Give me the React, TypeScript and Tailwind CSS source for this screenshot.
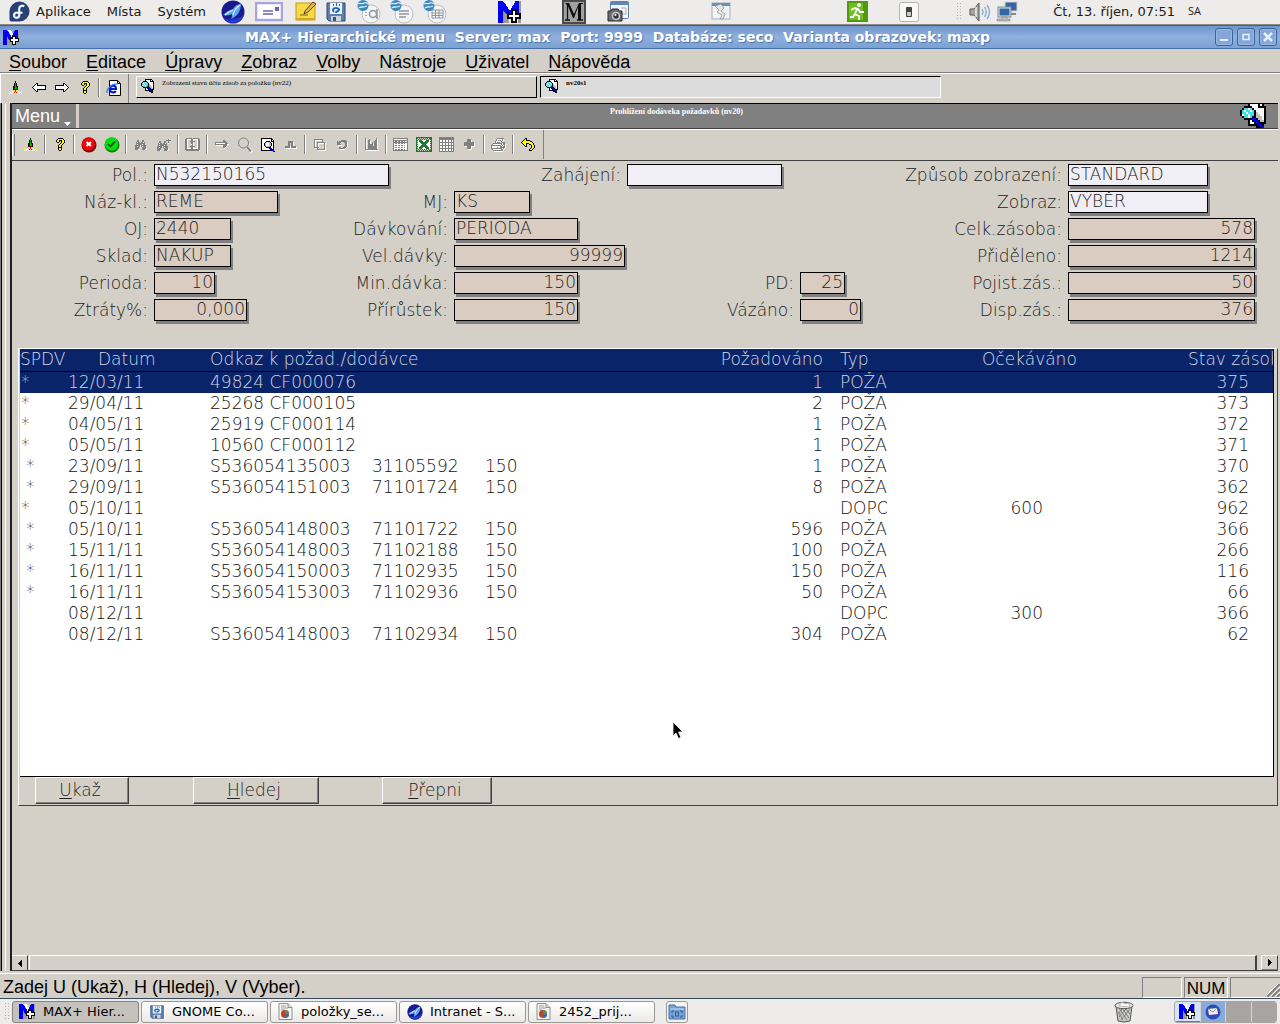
import React from 'react'

const PALETTE: Record<string, string> = {
  k: '#000000', w: '#ffffff', g: '#808080', G: '#00b400', r: '#e00000', y: '#ffff00',
  b: '#0000ff', c: '#40e0e8', l: '#c0c0c0', d: '#004000', n: '#000090', e: '#1c7c2c', s: '#d4d0c8',
}

/** Small bitmap-style icon: every character is one pixel, "." is transparent. */
function Pixels({ rows, size = 1 }: { rows: string[]; size?: number }) {
  const w = Math.max(...rows.map((r) => r.length))
  return (
    <svg className="shrink-0" width={w * size} height={rows.length * size} viewBox={`0 0 ${w} ${rows.length}`} shapeRendering="crispEdges" aria-hidden="true">
      {rows.flatMap((row, y) =>
        row.split('').map((c, x) => (c === '.' ? null : <rect key={`${x}-${y}`} x={x} y={y} width="1" height="1" fill={PALETTE[c]} />)),
      )}
    </svg>
  )
}

const ROCKET = ['......k......', '......k......', '.....kGk.....', '.....kGk.....', '.....kGk.....', '....kdGdk....', '....kdGGk....', '....kdGGk....', '....kkrkk....', '.....yry.....', 'y..w.yry.w..y', '.wyw.rwr.wyw.', 'w.w.wy.yw.w.w']
const HELP = ['...kkkkk..', '..kyyyyyk.', '.kyykkkyyk', '.kyyk.kyyk', '..kk..kyyk', '.....kyyk.', '....kyyk..', '...kyyk...', '...kyyk...', '...kkkk...', '...kyyk...', '...kyyk...', '....kk....']
const ARROW_L = ['....kk........', '...kwk........', '..kwwkkkkkkkkk', '.kwwwwwwwwwwwk', 'kwwwwwwwwwwwwk', '.kwwwwwwwwwwwk', '..kwwkkkkkkkkk', '...kwk........', '....kk........']
const ARROW_R = ARROW_L.map((r) => r.split('').reverse().join(''))
const DOC_FIND = ['....kkkkkkk...', '....kwwwwkwk..', '..kkkkwwwkkkk.', '.kccwckwwwwwk.', 'kcwccwckwwwwk.', 'kccwcccklwwwk.', 'kwccwcckllwwk.', '.kccwckklllwk.', '..kkkkbbkllwk.', '....kwkbbkllk.', '....kwwkbnkkk.', '....kkkkkbbk..', '........kknb..', '..........kk..']
const PAGE_FIND = ['kkkkkkkkkkk...', 'kwwwwwwwwwkk..', 'kwwwwwwwwwkwk.', 'kwwwwkkkkwkkk.', 'kwwwklwllkwwk.', 'kwwklwwwllkwk.', 'kwwklwwwllkwk.', 'kwwklwwwllkwk.', 'kwwwkllllkwwk.', 'kwwwwkkkkbwwk.', 'kwwwwwwwkbbwk.', 'kwwwwwwwwkbbk.', 'kkkkkkkkkkkbb.', '............bk']
const BINOC = ['..gg...gg...', '..gg...gg...', '.gwgg.ggwg..', '.ggggggggg..', '.gwggggwgg..', 'gggggwggggg.', 'ggwgg.gwggg.', 'gggg...gggg.', 'gggg...ggggw', 'gggw...gggww']
const BINOC_PLUS = ['...........g..', '.........ggggg', '..gg...gg..g..', '..gg...gg..g..', '.gwgg.ggwg.w..', '.ggggggggg....', '.gwggggwgg....', 'gggggwggggg...', 'ggwgg.gwggg...', 'gggg...gggg...', 'gggg...ggggw..', 'gggw...gggw...']
const ARROW_G = ['.........gg....', '.........ggg...', '.gggggggggggg..', '.gwwwwwwwwwggg.', '.ggggggggggggww', '..wwwwwwwggggw.', '.........gggw..', '.........ggw...', '..........w....']
const OMEGA = ['...ggggg....', '...gggggw...', '...gg.ggw...', '...gg.ggw...', '...gg.ggw...', 'gggggwggggg.', 'gggggwgggggw', '.wwwww.wwwww']
const COPY = ['ggggggggg...', 'gwwwwwwwg...', 'gw......g...', 'gw.gggggggg.', 'gw.gwwwwwwgw', 'gw.gw.....gw', 'gw.gw.....gw', 'gw.gw.....gw', 'gggggw....gw', '.wwgw.....gw', '...ggggggggw', '....wwwwwwww']
const REDO = ['....ggggg..', 'g.gggggggg.', 'gggg...gggw', 'ggg.....ggw', 'gggg....ggw', '.wwww...ggw', '.......gggw', '..gg..gggw.', '..ggggggw..', '...wwwww...']
const CHART = ['g..........g..', 'gw..g......gw.', 'gw.gg.....ggw.', 'gw.ggw...gggw.', 'gw.ggw.g.gggw.', 'gw.ggw.g.gggw.', 'gw.gggggwgggw.', 'gw.gggggwgggw.', 'gw.gggggggggw.', 'gw.gggggggggw.', 'gw.gggggggggw.', 'ggggggggggggg.', '.wwwwwwwwwwwww']
const SHEET = ['ggggggggggggggg', 'gwwwwwwwwwwwwwg', 'ggggggggggggggg', 'gwggwggwggwgwwg', 'ggggggggggggggg', 'gwggwggwggwgwwg', 'gwwwwwwwwwwwwwg', 'gwggwggwggwgwwg', 'gwwwwwwwwwwwwwg', 'gwggwggwggwgwwg', 'gwwwwwwwwwwwwwg', 'gwggwggwggwgwwg', 'ggggggggggggggg']
const GRID = ['ggggggggggggggg', 'ggggggggggggggg', 'ggggggggggggggg', 'gwwgwwgwwgwwgwg', 'gwwgwwgwwgwwgwg', 'ggggggggggggggg', 'gwwgwwgwwgwwgwg', 'gwwgwwgwwgwwgwg', 'ggggggggggggggg', 'gwwgwwgwwgwwgwg', 'gwwgwwgwwgwwgwg', 'ggggggggggggggg', 'gwwgwwgwwgwwgwg', 'gwwgwwgwwgwwgwg', 'ggggggggggggggg']
const PLUS = ['...gggg....', '...ggggw...', '...ggggw...', 'gggggggggg.', 'ggggggggggw', 'ggggggggggw', 'ggggggggggw', '.wwggggwwww', '...ggggw...', '...ggggw...', '....wwww...']
const EXCEL = ['eeeeeeeeeeeeeeee', 'eeseseseseseseee', 'esesesesesesesee', 'eeweeewwwweeewse', 'esweeeewweeeewee', 'eewweeeeeeeewwse', 'eswwweeeeeewwwee', 'eewwwweeeewwwwse', 'eswwweeeeeewwwee', 'eewweeeeeeeewwse', 'esweeeewweeeewee', 'eeweeewwwweeewse', 'esesesesesesesee', 'eeseseseseseseee', 'eeeeeeeeeeeeeeee']
const PRINTER = ['......ggggggg..', '.....gwwwwwgw..', '.....gwgggwgw..', '....gwwwwwgw...', '....gwgggwgggg.', '..gggggggggwgg.', '.gwwwwwwwwgwggw', 'ggggggggggwgwgw', 'gwwwwwwwwggwggw', 'gwwwwwgwwgggggw', 'gggggggggggwgw.', '.gwwwwwwwwggw..', '..ggggggggggw..', '...wwwwwwwww...']
const UNDO = ['....kk........', '...kyk........', '..kyykkkk.....', '.kyyyyyyykk...', 'kyyyyyyyyyyk..', '.kyyykkkyyyyk.', '..kyyk..kkyyk.', '...kyk....kyyk', '....kk....kyyk', '..........kyyk', '.........kyyk.', '........kyyk..', '........kkk...']
const BOOK = ['.gggggg.gggggg.', 'ggwwwwggwwwwwgg', 'ggw...ggw...wgg', 'ggw..ggggg..wgg', 'ggw...ggw...wgg', 'ggw...ggw...wgg', 'ggw...wgw...wgg', 'ggw...ggw...wgg', 'ggw..ggggg..wgg', 'ggw...ggw...wgg', 'ggwwwwggwwwwwgg', 'ggggggggggggggg', '.gggggggggggggw']
const TRI_L = ['...k', '..kk', '.kkk', 'kkkk', '.kkk', '..kk', '...k']
const TRI_R = TRI_L.map((r) => r.split('').reverse().join(''))

function MaxLogo({ s = 18 }: { s?: number }) {
  return (
    <svg width={s} height={s} viewBox="0 0 18 18" className="shrink-0" shapeRendering="crispEdges" aria-hidden="true">
      <path d="M15 1h2v16h-2zM4 8l4 4v5H4z" fill="#9a9a9a" />
      <path d="M5 1h3l3 4-2 3z" fill="#fff" />
      <path d="M0 1h4l5 7 4-7h3v13h-4V9l-3 5-5-6v9H0z" fill="#0000f4" />
      <path d="M10 7h4v3h3v4h-3v3h-4v-3H7v-4h3z" fill="#000" />
      <path d="M11 8h2v3h3v2h-3v3h-2v-3H8v-2h3z" fill="#fff" />
    </svg>
  )
}
function Fedora() {
  return (
    <svg width="21" height="21" viewBox="0 0 22 22" aria-hidden="true">
      <path d="M11 .5A10.500 10.500 0 1 1 11 21.500H2.500Q.5 21.500.5 19.500V11A10.500 10.500 0 0 1 11 .5z" fill="#294172" />
      <path d="M16 5.500c-3-1.500-5.300.2-5.300 3V15c0 3-4 3.500-5.200 1.200-.8-2.500.8-4.200 3-4h5.500" fill="none" stroke="#a9c3e8" strokeWidth="2.600" />
      <path d="M16 5.500c-3-1.500-5.300.2-5.300 3V15c0 3-4 3.500-5.200 1.200-.8-2.500.8-4.200 3-4h5.500" fill="none" stroke="#fff" strokeWidth="1.500" />
    </svg>
  )
}
function Seamonkey({ s = 24 }: { s?: number }) {
  return (
    <svg width={s} height={s} viewBox="0 0 24 24" className="shrink-0" aria-hidden="true">
      <circle cx="12" cy="12" r="11.500" fill="#1a1a8e" />
      <path d="M3 18A11 11 0 0 0 23 14c-4 5-13 7-20 4z" fill="#2437d8" />
      <path d="M20 4c-4 0-7 3-8 5-3 1-7 3-10 6 4 1 7 0 9-1 0 2 0 3-1 5 6-2 10-8 10-15z" fill="#5aa4f4" />
      <path d="M19 5c-3 2-6 6-7 10M12 10c-3 1-6 3-8 5" stroke="#d8f0ff" strokeWidth="1.200" fill="none" />
    </svg>
  )
}
function Mail() {
  return (
    <svg width="28" height="20" viewBox="0 0 28 20" aria-hidden="true">
      <rect x="1" y="1" width="26" height="17" fill="#fff" stroke="#a9a4dc" strokeWidth="2.500" />
      <path d="M8 9h10M8 12h10" stroke="#8d88cc" strokeWidth="2" />
      <path d="M20 5h4v4h-4z" fill="#6a66b8" />
    </svg>
  )
}
function Note() {
  return (
    <svg width="22" height="21" viewBox="0 0 22 21" aria-hidden="true">
      <rect x="1" y="2" width="19" height="17" fill="#f5d945" stroke="#c79a12" />
      <path d="M1 17h19v2H1z" fill="#d7a320" />
      <path d="M9 13l1-3L18 1l3 2-8 8z" fill="#e6b457" stroke="#5e4312" />
      <path d="M5 14h8" stroke="#75611a" />
    </svg>
  )
}
function Floppy({ s = 20 }: { s?: number }) {
  return (
    <svg width={s} height={s} viewBox="0 0 20 20" className="shrink-0" aria-hidden="true">
      <path d="M1 1h18v18H3l-2-2z" fill="#5a7fb0" stroke="#2f4a70" />
      <path d="M4 1h12v11H4z" fill="#eef3fa" />
      <path d="M5 14h10v5H5z" fill="#cfd5dc" /><path d="M7 15h3v4H7z" fill="#34587f" />
      <path d="M8 10c-2-2-1-4 2-4 3 0 4 2 2 3-1 1-2 0-2 2" fill="none" stroke="#1b66c9" strokeWidth="2" />
      <path d="M7 2h1v2H7zM10 1h1v3h-1zM13 2h1v2h-1z" fill="#1b66c9" />
    </svg>
  )
}
function Office({ kind }: { kind: 'draw' | 'text' | 'calc' }) {
  return (
    <svg width="24" height="24" viewBox="0 0 24 24" aria-hidden="true">
      <circle cx="14" cy="14" r="9" fill="#f4f5f6" stroke="#b9bec3" />
      {kind === 'text' && <path d="M9 11h10M9 14h10M9 17h7" stroke="#8f979e" strokeWidth="1.500" />}
      {kind === 'draw' && <g fill="none" stroke="#8f979e" strokeWidth="1.500"><circle cx="16" cy="14" r="3.500" /><path d="M9 12v1M9 15v1M19 10h1v8h-1" /></g>}
      {kind === 'calc' && <path d="M9 10h11v8H9zM9 13h11M9 15.500h11M12.500 10v8M16 10v8" fill="none" stroke="#8f979e" />}
      <circle cx="6" cy="5.500" r="5.500" fill="#3a86bd" />
      <path d="M1 4c3-2 4 1 6-1 2-1 3 0 4 1M2 8c2-2 4 0 8-2" stroke="#d7ecf9" strokeWidth="1.300" fill="none" />
    </svg>
  )
}
function BigM() {
  return (
    <svg width="24" height="24" viewBox="0 0 24 24" aria-hidden="true">
      <rect x="1" y="1" width="22" height="22" fill="#a2a2a2" stroke="#4a4a4a" strokeWidth="2" />
      <path d="M3 20h5M15 20h6M5.500 20V4" stroke="#111" strokeWidth="1.300" />
      <path d="M3 3h4l5 11 5-11h4v1h-2v16h-3V7l-4 11h-1L6 6z" fill="#0c0c0c" />
    </svg>
  )
}
function Camera() {
  return (
    <svg width="23" height="23" viewBox="0 0 23 23" aria-hidden="true">
      <rect x="3.500" y="1.500" width="18" height="17" rx="1" fill="#f2f4f6" stroke="#5c7fa8" />
      <path d="M4 2h17v3H4z" fill="#5f88b8" />
      <path d="M14 8h5v6h-4" fill="none" stroke="#a9afb5" />
      <path d="M1 11h3l1-2h6l1 2h3v10H1z" fill="#6a6d70" stroke="#2a2a2a" />
      <circle cx="9" cy="16" r="4.300" fill="#c9cdd0" /><circle cx="9" cy="16" r="2.700" fill="#30363c" /><circle cx="8.500" cy="15" r="1" fill="#fff" />
    </svg>
  )
}
function Broken() {
  return (
    <svg width="20" height="19" viewBox="0 0 20 19" aria-hidden="true">
      <rect x="1" y="1" width="18" height="16" fill="#f2f3f3" stroke="#a8b0b8" />
      <path d="M1 1h18v3H1z" fill="#6f8fb5" />
      <path d="M4 4l4 4-2 2 5 3-2 4h3l2-5-4-3 3-3-3-4z" fill="#e6e6e4" stroke="#8f969b" strokeWidth=".8" />
    </svg>
  )
}
function Runner() {
  return (
    <svg width="21" height="21" viewBox="0 0 21 21" aria-hidden="true">
      <rect width="21" height="21" fill="#4f9a0c" /><path d="M2 2h14v17H2z" fill="#6fbe22" />
      <circle cx="12" cy="4" r="2" fill="#fff" />
      <path d="M4 9l4-2 3 1 2 3 4 0M10 8l-2 5 4 2 0 4M8 13l-2 3H3" fill="none" stroke="#fff" strokeWidth="1.900" />
    </svg>
  )
}
function Switch() {
  return (
    <svg width="20" height="20" viewBox="0 0 20 20" aria-hidden="true">
      <rect x=".5" y=".5" width="19" height="19" rx="2" fill="#f8f8f7" stroke="#b5b5b2" />
      <rect x="7" y="5" width="6" height="10" rx="1" fill="#444" /><path d="M8 10h4v4H8z" fill="#c9c9c9" />
    </svg>
  )
}
function Speaker() {
  return (
    <svg width="22" height="20" viewBox="0 0 22 20" aria-hidden="true">
      <path d="M1 7h4l5-6v18l-5-6H1z" fill="#a3a6a3" stroke="#555753" /><path d="M7 5v10" stroke="#eee" strokeWidth="1.500" />
      <path d="M13 7q2 3 0 6M15.500 5q3.500 5 0 10M18 3q5 7 0 14" fill="none" stroke="#83a9d6" strokeWidth="1.300" />
    </svg>
  )
}
function Network() {
  return (
    <svg width="22" height="21" viewBox="0 0 22 21" aria-hidden="true">
      <rect x="9" y="1" width="12" height="9" fill="#3465a4" stroke="#d3d7cf" /><path d="M11 12h9v2h-9z" fill="#888a85" />
      <rect x="2" y="6" width="13" height="10" fill="#3465a4" stroke="#888a85" /><rect x="3" y="7" width="11" height="8" fill="none" stroke="#e8ecef" />
      <path d="M6 16h5v2h3v2H1v-2h5z" fill="#b6b9b4" stroke="#777" strokeWidth=".5" />
    </svg>
  )
}
function Explorer() {
  return (
    <svg width="16" height="16" viewBox="0 0 16 16" aria-hidden="true">
      <path d="M3.500.5h8l3 3v12h-11z" fill="#fff" stroke="#000" /><path d="M11.500.5v3h3" fill="none" stroke="#000" />
      <path d="M4 9h6c0-5-6-4-6.300 0 0 4 5 4 6 2" fill="none" stroke="#0018c8" strokeWidth="2.200" />
      <path d="M1 13C0 9 6 3 12 4" fill="none" stroke="#2d7fe8" strokeWidth="1.200" />
    </svg>
  )
}
function Ball({ ok }: { ok?: boolean }) {
  return (
    <svg width="16" height="16" viewBox="0 0 16 16" aria-hidden="true">
      <circle cx="8" cy="8" r="7.500" fill={ok ? '#087808' : '#700000'} />
      <circle cx="7.500" cy="7" r="6.700" fill={ok ? '#00e010' : '#e80808'} />
      {ok ? <path d="M4 7l2.500 2.500L11 4.500" fill="none" stroke="#003800" strokeWidth="1.500" /> : <path d="M5.500 5l4.500 4M10 5L5.500 9" stroke="#fff" strokeWidth="2" />}
    </svg>
  )
}
function Lens() {
  return (
    <svg width="16" height="16" viewBox="0 0 16 16" aria-hidden="true">
      <path d="M10 10l5 5" stroke="#fff" strokeWidth="3" /><circle cx="6.500" cy="6" r="5" fill="none" stroke="#808080" /><path d="M10 10l4 4.500" stroke="#808080" strokeWidth="2" />
    </svg>
  )
}
function ChartDoc() {
  return (
    <svg width="15" height="17" viewBox="0 0 15 17" className="shrink-0" aria-hidden="true">
      <path d="M1 .5h9l4 4v12H1z" fill="#f4f4f2" stroke="#8f918d" /><path d="M10 .5v4h4" fill="#d8d9d6" stroke="#8f918d" />
      <path d="M3 3h5M3 5h7M3 7h4" stroke="#9fa19d" />
      <circle cx="7" cy="11" r="4" fill="#b5442e" /><path d="M7 11h4a4 4 0 0 1-4 4z" fill="#3b6ea8" /><path d="M7 11V7a4 4 0 0 1 4 4z" fill="#5d9147" />
    </svg>
  )
}
function FolderCam() {
  return (
    <svg width="18" height="17" viewBox="0 0 18 17" aria-hidden="true">
      <path d="M1 2h6l1 2h9v12H1z" fill="#76a3d8" stroke="#4673a8" /><path d="M2 6h14" stroke="#c1d8f0" />
      <path d="M4 8h2M4 8v2M14 8h-2M14 8v2M4 14h2M4 14v-2M14 14h-2M14 14v-2" stroke="#30598c" /><rect x="7.500" y="9" width="3" height="4" fill="none" stroke="#30598c" />
    </svg>
  )
}
function Trash() {
  return (
    <svg width="21" height="22" viewBox="0 0 21 22" aria-hidden="true">
      <path d="M2 5l2 15q6 2 12 0L18 5z" fill="#c6c9c4" stroke="#555753" />
      <path d="M5 7l8 12M8 7l7 10M4 11l5 8M11 7l5 6M16 8L7 19M12 8L5 16M8 8l-3 4" stroke="#70736d" strokeWidth=".8" />
      <ellipse cx="10" cy="4.500" rx="9" ry="3.200" fill="#e9ebe8" stroke="#555753" /><path d="M5 5l3-4 3 2 4-1 1 4z" fill="#fff" stroke="#999" strokeWidth=".7" />
    </svg>
  )
}

const PANEL: { icon: React.ReactNode; gap: string; name: string }[] = [
  { icon: <Seamonkey />, gap: 'ml-[15px]', name: 'SeaMonkey' },
  { icon: <Mail />, gap: 'ml-[10px]', name: 'Pošta' },
  { icon: <Note />, gap: 'ml-[12px]', name: 'Poznámky' },
  { icon: <Floppy />, gap: 'ml-[9px]', name: 'GNOME Commander' },
  { icon: <Office kind="draw" />, gap: 'ml-[11px]', name: 'Kreslení' },
  { icon: <Office kind="text" />, gap: 'ml-[9px]', name: 'Textový dokument' },
  { icon: <Office kind="calc" />, gap: 'ml-[9px]', name: 'Sešit' },
  { icon: <MaxLogo s={24} />, gap: 'ml-[51px]', name: 'MAX+' },
  { icon: <BigM />, gap: 'ml-[40px]', name: 'M' },
  { icon: <Camera />, gap: 'ml-[21px]', name: 'Snímek obrazovky' },
  { icon: <Broken />, gap: 'ml-[81px]', name: 'Ukončit program' },
  { icon: <Runner />, gap: 'ml-[116px]', name: 'Odhlásit' },
  { icon: <Switch />, gap: 'ml-[31px]', name: 'Vypnout' },
]

function Grip() {
  return <div className="h-[19px] w-[5px] bg-[radial-gradient(circle,#b4b2af_1px,transparent_1px)] bg-[length:3px_3px]" />
}

function TopPanel() {
  return (
    <header className="flex h-[25px] items-center border-b border-[#8a8983] bg-[#edeceb] pb-px pl-[9px] font-['DejaVu_Sans'] text-[13px] whitespace-nowrap text-[#1a1a1a]">
      <Fedora />
      <nav className="ml-[6px] flex gap-4">
        <button>Aplikace</button><button>Místa</button><button>Systém</button>
      </nav>
      {PANEL.map((p) => (
        <button key={p.name} aria-label={p.name} className={`shrink-0 ${p.gap}`}>{p.icon}</button>
      ))}
      <div className="ml-[37px]"><Grip /></div>
      <div className="ml-[8px]"><Speaker /></div>
      <div className="ml-[5px]"><Network /></div>
      <button className="ml-auto">Čt, 13. říjen, 07:51</button>
      <span className="mr-[79px] ml-[13px] text-[11px] font-['Open_Sans']">SA</span>
    </header>
  )
}

function WinButton({ label, children }: { label: string; children: React.ReactNode }) {
  return (
    <button aria-label={label} className="flex h-[18px] w-[18px] items-center justify-center rounded-[3px] border border-[#3d6298] bg-[#83a7d9] shadow-[inset_0_0_0_1px_#98b8e2]">
      <svg width="10" height="10" viewBox="0 0 10 10" fill="none" stroke="#e8f1fb" strokeWidth="2">{children}</svg>
    </button>
  )
}

function TitleBar() {
  return (
    <div className="flex h-6 items-center border-t border-b border-t-[#3f5f8d] border-b-[#4671a8] bg-linear-to-b from-[#6f95cc] via-[#8fb0dd] to-[#7ba0d3] px-[3px]">
      <MaxLogo s={17} />
      <h1 className="flex-1 text-center font-['DejaVu_Sans'] text-[14px] leading-5 font-bold whitespace-pre text-white [text-shadow:1px_1px_1px_#4d74aa]">
        {'MAX+ Hierarchické menu  Server: max  Port: 9999  Databáze: seco  Varianta obrazovek: maxp'}
      </h1>
      <div className="flex gap-1">
        <WinButton label="Minimalizovat"><path d="M1 8h8" /></WinButton>
        <WinButton label="Maximalizovat"><path d="M2 2.500h6v5H2z" strokeWidth="1.500" /></WinButton>
        <WinButton label="Zavřít"><path d="M1 1l8 8M9 1l-8 8" strokeWidth="2.500" /></WinButton>
      </div>
    </div>
  )
}

const MENU: [string, string, string][] = [
  ['', 'S', 'oubor'], ['', 'E', 'ditace'], ['', 'Ú', 'pravy'], ['', 'Z', 'obraz'], ['', 'V', 'olby'], ['Nás', 't', 'roje'], ['', 'U', 'živatel'], ['', 'N', 'ápověda'],
]

function Tab({ active, children }: { active?: boolean; children: React.ReactNode }) {
  return (
    <button
      className={
        active
          ? "flex h-[22px] w-[401px] items-start border border-t-black border-r-white border-b-white border-l-black bg-[#dcdcdc] pt-[2px] pl-1 font-['Liberation_Serif'] text-[7px] leading-[9px] font-bold"
          : "flex h-[22px] w-[401px] items-start border border-t-white border-r-black border-b-black border-l-white pt-[2px] pl-1 font-['Liberation_Serif'] text-[7px] leading-[9px]"
      }
    >
      <Pixels rows={DOC_FIND} />
      <span className="ml-[7px]">{children}</span>
    </button>
  )
}

function Tool({ label, children }: { label: string; children: React.ReactNode }) {
  return <button aria-label={label} className="flex h-5 w-[23px] shrink-0 items-center justify-center">{children}</button>
}
function Sep() {
  return <div className="mx-[2px] h-[19px] w-[2px] shrink-0 border-r border-l border-r-white border-l-[#808080]" />
}

const LIGHT = "font-['DejaVu_Sans'] font-extralight text-[17px]"

type FieldProps = { id: string; label: string; value: string; w: string; cell: string; labelCell: string; right?: boolean; white?: boolean }
function Field({ id, label, value, w, cell, labelCell, right, white }: FieldProps) {
  return (
    <>
      <label htmlFor={id} className={`justify-self-end pr-[6px] leading-[22px] whitespace-nowrap ${labelCell}`}>{label}</label>
      <input
        id={id}
        defaultValue={value}
        className={`h-[22px] border border-black px-px shadow-[2px_3px_0_#808080] outline-none ${w} ${cell} ${right ? 'text-right' : ''} ${white ? 'bg-[#f0eff6]' : 'bg-[#daccc1]'}`}
      />
    </>
  )
}

const FIELDS: FieldProps[] = [
  { id: 'pol', label: 'Pol.:', value: 'N532150165', w: 'w-[235px]', labelCell: 'col-start-1 row-start-1', cell: 'col-start-2 col-span-2 row-start-1', white: true },
  { id: 'zah', label: 'Zahájení:', value: '', w: 'w-[155px]', labelCell: 'col-start-4 row-start-1', cell: 'col-start-5 row-start-1', white: true },
  { id: 'zpu', label: 'Způsob zobrazení:', value: 'STANDARD', w: 'w-[140px]', labelCell: 'col-start-7 row-start-1', cell: 'col-start-8 row-start-1', white: true },
  { id: 'naz', label: 'Náz-kl.:', value: 'REME', w: 'w-[124px]', labelCell: 'col-start-1 row-start-2', cell: 'col-start-2 row-start-2' },
  { id: 'mj', label: 'MJ:', value: 'KS', w: 'w-[76px]', labelCell: 'col-start-3 row-start-2', cell: 'col-start-4 row-start-2' },
  { id: 'zob', label: 'Zobraz:', value: 'VÝBĚR', w: 'w-[140px]', labelCell: 'col-start-7 row-start-2', cell: 'col-start-8 row-start-2', white: true },
  { id: 'oj', label: 'OJ:', value: '2440', w: 'w-[77px]', labelCell: 'col-start-1 row-start-3', cell: 'col-start-2 row-start-3' },
  { id: 'dav', label: 'Dávkování:', value: 'PERIODA', w: 'w-[124px]', labelCell: 'col-start-3 row-start-3', cell: 'col-start-4 row-start-3' },
  { id: 'cel', label: 'Celk.zásoba:', value: '578', w: 'w-[187px]', labelCell: 'col-start-7 row-start-3', cell: 'col-start-8 row-start-3', right: true },
  { id: 'skl', label: 'Sklad:', value: 'NAKUP', w: 'w-[77px]', labelCell: 'col-start-1 row-start-4', cell: 'col-start-2 row-start-4' },
  { id: 'vel', label: 'Vel.dávky:', value: '99999', w: 'w-[171px]', labelCell: 'col-start-3 row-start-4', cell: 'col-start-4 row-start-4', right: true },
  { id: 'pri', label: 'Přiděleno:', value: '1214', w: 'w-[187px]', labelCell: 'col-start-7 row-start-4', cell: 'col-start-8 row-start-4', right: true },
  { id: 'per', label: 'Perioda:', value: '10', w: 'w-[61px]', labelCell: 'col-start-1 row-start-5', cell: 'col-start-2 row-start-5', right: true },
  { id: 'min', label: 'Min.dávka:', value: '150', w: 'w-[124px]', labelCell: 'col-start-3 row-start-5', cell: 'col-start-4 row-start-5', right: true },
  { id: 'pd', label: 'PD:', value: '25', w: 'w-[45px]', labelCell: 'col-start-5 row-start-5', cell: 'col-start-6 row-start-5', right: true },
  { id: 'poj', label: 'Pojist.zás.:', value: '50', w: 'w-[187px]', labelCell: 'col-start-7 row-start-5', cell: 'col-start-8 row-start-5', right: true },
  { id: 'ztr', label: 'Ztráty%:', value: '0,000', w: 'w-[93px]', labelCell: 'col-start-1 row-start-6', cell: 'col-start-2 row-start-6', right: true },
  { id: 'prr', label: 'Přírůstek:', value: '150', w: 'w-[124px]', labelCell: 'col-start-3 row-start-6', cell: 'col-start-4 row-start-6', right: true },
  { id: 'vaz', label: 'Vázáno:', value: '0', w: 'w-[61px]', labelCell: 'col-start-5 row-start-6', cell: 'col-start-6 row-start-6', right: true },
  { id: 'dis', label: 'Disp.zás.:', value: '376', w: 'w-[187px]', labelCell: 'col-start-7 row-start-6', cell: 'col-start-8 row-start-6', right: true },
]

// mark position, date, reference, order number, lot, required, type, expected, stock
const ROWS: [number, string, string, string, string, string, string, string, string][] = [
  [1, '12/03/11', '49824 CF000076', '', '', '1', 'POŽA', '', '375'],
  [1, '29/04/11', '25268 CF000105', '', '', '2', 'POŽA', '', '373'],
  [1, '04/05/11', '25919 CF000114', '', '', '1', 'POŽA', '', '372'],
  [1, '05/05/11', '10560 CF000112', '', '', '1', 'POŽA', '', '371'],
  [2, '23/09/11', 'S536054135003', '31105592', '150', '1', 'POŽA', '', '370'],
  [2, '29/09/11', 'S536054151003', '71101724', '150', '8', 'POŽA', '', '362'],
  [1, '05/10/11', '', '', '', '', 'DOPO', '600', '962'],
  [2, '05/10/11', 'S536054148003', '71101722', '150', '596', 'POŽA', '', '366'],
  [2, '15/11/11', 'S536054148003', '71102188', '150', '100', 'POŽA', '', '266'],
  [2, '16/11/11', 'S536054150003', '71102935', '150', '150', 'POŽA', '', '116'],
  [2, '16/11/11', 'S536054153003', '71102936', '150', '50', 'POŽA', '', '66'],
  [0, '08/12/11', '', '', '', '', 'DOPO', '300', '366'],
  [0, '08/12/11', 'S536054148003', '71102934', '150', '304', 'POŽA', '', '62'],
]

function StockTable() {
  return (
    <table className="w-full table-fixed border-collapse text-left leading-[21px] whitespace-nowrap">
      <colgroup>
        <col className="w-[48px]" /><col className="w-[142px]" /><col className="w-[162px]" /><col className="w-[113px]" /><col />
        <col className="w-[258px]" /><col className="w-[64px]" /><col className="w-[156px]" /><col className="w-[206px]" /><col className="w-[24px]" />
      </colgroup>
      <thead>
        <tr className="h-[22px] bg-[#0a246a] text-[#d4d8e4] [&>th]:p-0 [&>th]:font-extralight">
          <th>SPDV</th>
          <th><span className="pl-[30px]">Datum</span></th>
          <th colSpan={3}>Odkaz k požad./dodávce</th>
          <th className="text-right">Požadováno</th>
          <th><span className="pl-[17px]">Typ</span></th>
          <th><span className="pl-[95px]">Očekáváno</span></th>
          <th colSpan={2} className="overflow-hidden"><span className="pl-[145px]">Stav zásob</span></th>
        </tr>
      </thead>
      <tbody>
        {ROWS.map(([mark, date, ref, order, lot, need, type, expected, stock], i) => (
          <tr key={i} className={i === 0 ? 'h-[21px] border-t border-black bg-[#0a246a] text-[#d4d8e4] [&>td]:p-0' : 'h-[21px] text-[#111] [&>td]:p-0'}>
            <td><span className={mark === 2 ? 'pl-[6px]' : 'pl-px'}>{mark ? '*' : ''}</span></td>
            <td>{date}</td>
            <td>{ref}</td>
            <td>{order}</td>
            <td>{lot}</td>
            <td className="text-right">{need}</td>
            <td><div className="ml-[17px] overflow-hidden">{type}</div></td>
            <td className="text-right">{expected}</td>
            <td className="text-right">{stock}</td>
            <td />
          </tr>
        ))}
      </tbody>
    </table>
  )
}

function Command({ k, rest, w }: { k: string; rest: string; w: string }) {
  return (
    <button className={`h-[27px] border border-t-white border-r-[#404040] border-b-[#404040] border-l-white pr-1 text-[#222] shadow-[inset_-1px_-1px_0_#808080] ${w}`}>
      <span className="underline underline-offset-2">{k}</span>{rest}
    </button>
  )
}

function TaskButton({ icon, text, active }: { icon: React.ReactNode; text: string; active?: boolean }) {
  return (
    <button
      className={
        active
          ? 'flex h-[22px] w-[127px] items-center gap-[7px] rounded-[3px] border border-[#85827e] bg-[#c5c2be] pl-[6px]'
          : 'flex h-[22px] w-[127px] items-center gap-[7px] rounded-[3px] border border-[#9b9792] bg-linear-to-b from-white to-[#ebeae8] pl-[6px]'
      }
    >
      <span className="flex w-[17px] justify-center">{icon}</span>
      <span className="whitespace-nowrap">{text}</span>
    </button>
  )
}

export default function App() {
  return (
    <div className="flex min-h-screen flex-col overflow-hidden bg-[#d4d0c8] text-black">
      <TopPanel />
      <TitleBar />
      <nav className="flex h-[24px] items-center gap-[19px] border-b border-[#808080] pt-[2px] pl-[9px] font-['Liberation_Sans'] text-[18px] leading-[22px]">
        {MENU.map(([pre, key, post]) => (
          <button key={pre + key + post}>{pre}<span className="underline underline-offset-2">{key}</span>{post}</button>
        ))}
      </nav>
      <div className="flex h-[30px] shrink-0 items-start border-t border-l border-white">
        <div className="flex h-full items-center border-r border-[#808080] pr-[3px] pb-[2px] pl-[3px]">
          <Tool label="Spustit"><Pixels rows={ROCKET} /></Tool>
          <Tool label="Zpět"><Pixels rows={ARROW_L} /></Tool>
          <Tool label="Vpřed"><Pixels rows={ARROW_R} /></Tool>
          <Tool label="Nápověda"><Pixels rows={HELP} /></Tool>
          <Sep />
          <Tool label="Prohlížeč"><Explorer /></Tool>
        </div>
        <div className="flex gap-[3px] pt-[2px] pl-[7px]">
          <Tab>Zobrazení stavu účtu zásob za položku (nv22)</Tab>
          <Tab active>nv20s1</Tab>
        </div>
      </div>

      <div className="flex flex-1">
        <div className="flex w-[10px] border-l border-[#808080]">
          <div className="w-[4px] border-l border-black" />
          <div className="flex-1 border-l border-white" />
        </div>
        <main className="mr-[2px] flex min-w-0 flex-1 flex-col border-l-2 border-[#202020]">
          <div className="flex h-[26px] border-t border-b border-t-black border-b-[#404040] bg-[#808080] text-white">
            <button className="flex w-[67px] items-center border-r-[3px] border-[#d4d0c8] pl-[3px] font-['Liberation_Sans'] text-[18px]">
              Menu
              <svg className="mt-[15px] ml-[4px]" width="7" height="4" viewBox="0 0 7 4" aria-hidden="true"><path d="M0 0h7L3.500 4z" fill="#fff" /></svg>
            </button>
            <h2 className="flex-1 pt-[3px] pl-[34px] text-center font-['Liberation_Serif'] text-[8px] leading-[9px] font-bold">Prohlížení dodáveka požadavků (nv20)</h2>
            <div className="w-[38px]"><Pixels rows={DOC_FIND.slice(1, 13)} size={2} /></div>
          </div>
          <div className="flex h-[32px] items-center border-t border-b border-t-white border-b-[#404040] pb-px">
            <div className="mr-1 h-[22px] w-[3px] border-r border-l border-r-[#808080] border-l-white" />
            <Tool label="Spustit úlohu"><Pixels rows={ROCKET} /></Tool><Sep />
            <Tool label="Nápověda k obrazovce"><Pixels rows={HELP} /></Tool><Sep />
            <Tool label="Zrušit"><Ball /></Tool>
            <Tool label="Potvrdit"><Ball ok /></Tool><Sep />
            <Tool label="Najít"><Pixels rows={BINOC} /></Tool>
            <Tool label="Najít další"><Pixels rows={BINOC_PLUS} /></Tool><Sep />
            <Tool label="Kniha"><Pixels rows={BOOK} /></Tool><Sep />
            <Tool label="Přejít"><Pixels rows={ARROW_G} /></Tool>
            <Tool label="Lupa"><Lens /></Tool>
            <Tool label="Náhled"><Pixels rows={PAGE_FIND} /></Tool>
            <Tool label="Razítko"><Pixels rows={OMEGA} /></Tool><Sep />
            <Tool label="Kopírovat"><Pixels rows={COPY} /></Tool>
            <Tool label="Obnovit"><Pixels rows={REDO} /></Tool><Sep />
            <Tool label="Graf"><Pixels rows={CHART} /></Tool><Sep />
            <Tool label="Tabulka"><Pixels rows={SHEET} /></Tool>
            <Tool label="Excel"><Pixels rows={EXCEL} /></Tool>
            <Tool label="Mřížka"><Pixels rows={GRID} /></Tool>
            <Tool label="Přidat"><Pixels rows={PLUS} /></Tool><Sep />
            <Tool label="Tisk"><Pixels rows={PRINTER} /></Tool><Sep />
            <Tool label="Návrat"><Pixels rows={UNDO} /></Tool>
            <div className="ml-1 h-full border-l border-[#808080]" />
          </div>

          <form className={`grid shrink-0 auto-rows-[27px] grid-cols-[142fr_146fr_154fr_173fr_173fr_98fr_170fr_210fr] items-start pt-[3px] text-[#222] ${LIGHT}`}>
            {FIELDS.map((f) => <Field key={f.id} {...f} />)}
          </form>

          <section className={`mt-[22px] ml-[6px] flex shrink-0 flex-col border border-t-white border-r-[#404040] border-b-[#404040] border-l-white ${LIGHT}`}>
            <div className="relative mr-[3px] ml-px min-h-[428px] border-r border-b border-black bg-white">
              <StockTable />
              <svg className="absolute top-[372px] left-[52%]" width="12" height="19" viewBox="0 0 12 19" aria-hidden="true">
                <path d="M1 1v14l3-3 2.500 5.500 2.500-1L6.500 11H11z" fill="#000" stroke="#fff" strokeWidth=".8" />
              </svg>
            </div>
            <div className="flex pb-px pl-4">
              <Command k="U" rest="kaž" w="w-[94px]" />
              <Command k="H" rest="ledej" w="ml-[64px] w-[126px]" />
              <Command k="P" rest="řepni" w="ml-[63px] w-[110px]" />
            </div>
          </section>

          <div className="mt-auto flex h-[16px] border-b border-[#404040]">
            <button aria-label="Posunout vlevo" className="flex w-4 items-center justify-center border-t border-r border-t-white border-r-[#404040]"><Pixels rows={TRI_L} /></button>
            <div className="ml-px flex-1 border-t border-r-2 border-l border-t-white border-r-[#404040] border-l-white" />
            <button aria-label="Posunout vpravo" className="ml-1 flex w-[17px] items-center justify-center border border-t-white border-r-[#404040] border-b-[#808080] border-l-white"><Pixels rows={TRI_R} /></button>
          </div>
        </main>
      </div>

      <footer className="mt-[2px] flex h-[25px] shrink-0 items-center border-t border-white pt-[2px] pl-[3px] font-['Liberation_Sans'] text-[18px]">
        <p className="flex-1">Zadej U (Ukaž), H (Hledej), V (Vyber).</p>
        <div className="flex h-[21px] gap-[2px] text-[17px] leading-[21px]">
          <div className="w-[40px] border border-t-[#808080] border-r-white border-b-white border-l-[#808080]" />
          <div className="w-[44px] border border-t-[#808080] border-r-white border-b-white border-l-[#808080] text-center">NUM</div>
          <div className="flex w-[50px] items-end justify-end border border-r-0 border-t-[#808080] border-b-white border-l-[#808080]">
            <svg width="13" height="13" viewBox="0 0 13 13" aria-hidden="true"><path d="M0 13L13 0M5 13l8-8M10 13l3-3" stroke="#808080" strokeWidth="2" /><path d="M-1 12L12-1M4 12l9-9M9 12l4-4" stroke="#fff" /></svg>
          </div>
        </div>
      </footer>

      <div className="flex h-[26px] shrink-0 items-center gap-[2px] border-t border-[#34495c] bg-[#edeceb] pr-[3px] pl-1 font-['DejaVu_Sans'] text-[13px]">
        <div className="mr-px"><Grip /></div>
        <TaskButton active icon={<MaxLogo s={17} />} text="MAX+ Hier..." />
        <TaskButton icon={<Floppy s={14} />} text="GNOME Co..." />
        <TaskButton icon={<ChartDoc />} text="položky_se..." />
        <TaskButton icon={<Seamonkey s={16} />} text="Intranet - S..." />
        <TaskButton icon={<ChartDoc />} text="2452_prij..." />
        <button aria-label="Snímky" className="ml-[9px] flex h-[22px] w-[22px] items-center justify-center rounded-[3px] border border-[#9b9792] bg-[#f4f3f2]"><FolderCam /></button>
        <button aria-label="Koš" className="ml-auto"><Trash /></button>
        <div className="ml-[37px] flex h-[22px] w-[103px] gap-px overflow-hidden rounded-[3px] border border-[#a8a4a1] bg-[#d8d6d4]">
          <div className="flex flex-1 items-center justify-center border-b border-[#4a80c8] bg-[#d4e4fa]"><MaxLogo s={17} /></div>
          <div className="flex flex-1 items-center justify-center bg-[#86abd9]">
            <svg width="16" height="16" viewBox="0 0 16 16" aria-hidden="true"><circle cx="8" cy="8" r="7.500" fill="#3048b8" /><path d="M3 5l9-1 1 6-9 1z" fill="#f4f0e8" /><path d="M3 5l5 3 4-4" fill="none" stroke="#999" /></svg>
          </div>
          <div className="flex-1 bg-[#a8a4a1]" />
          <div className="flex-1 bg-[#a8a4a1]" />
        </div>
      </div>
    </div>
  )
}
